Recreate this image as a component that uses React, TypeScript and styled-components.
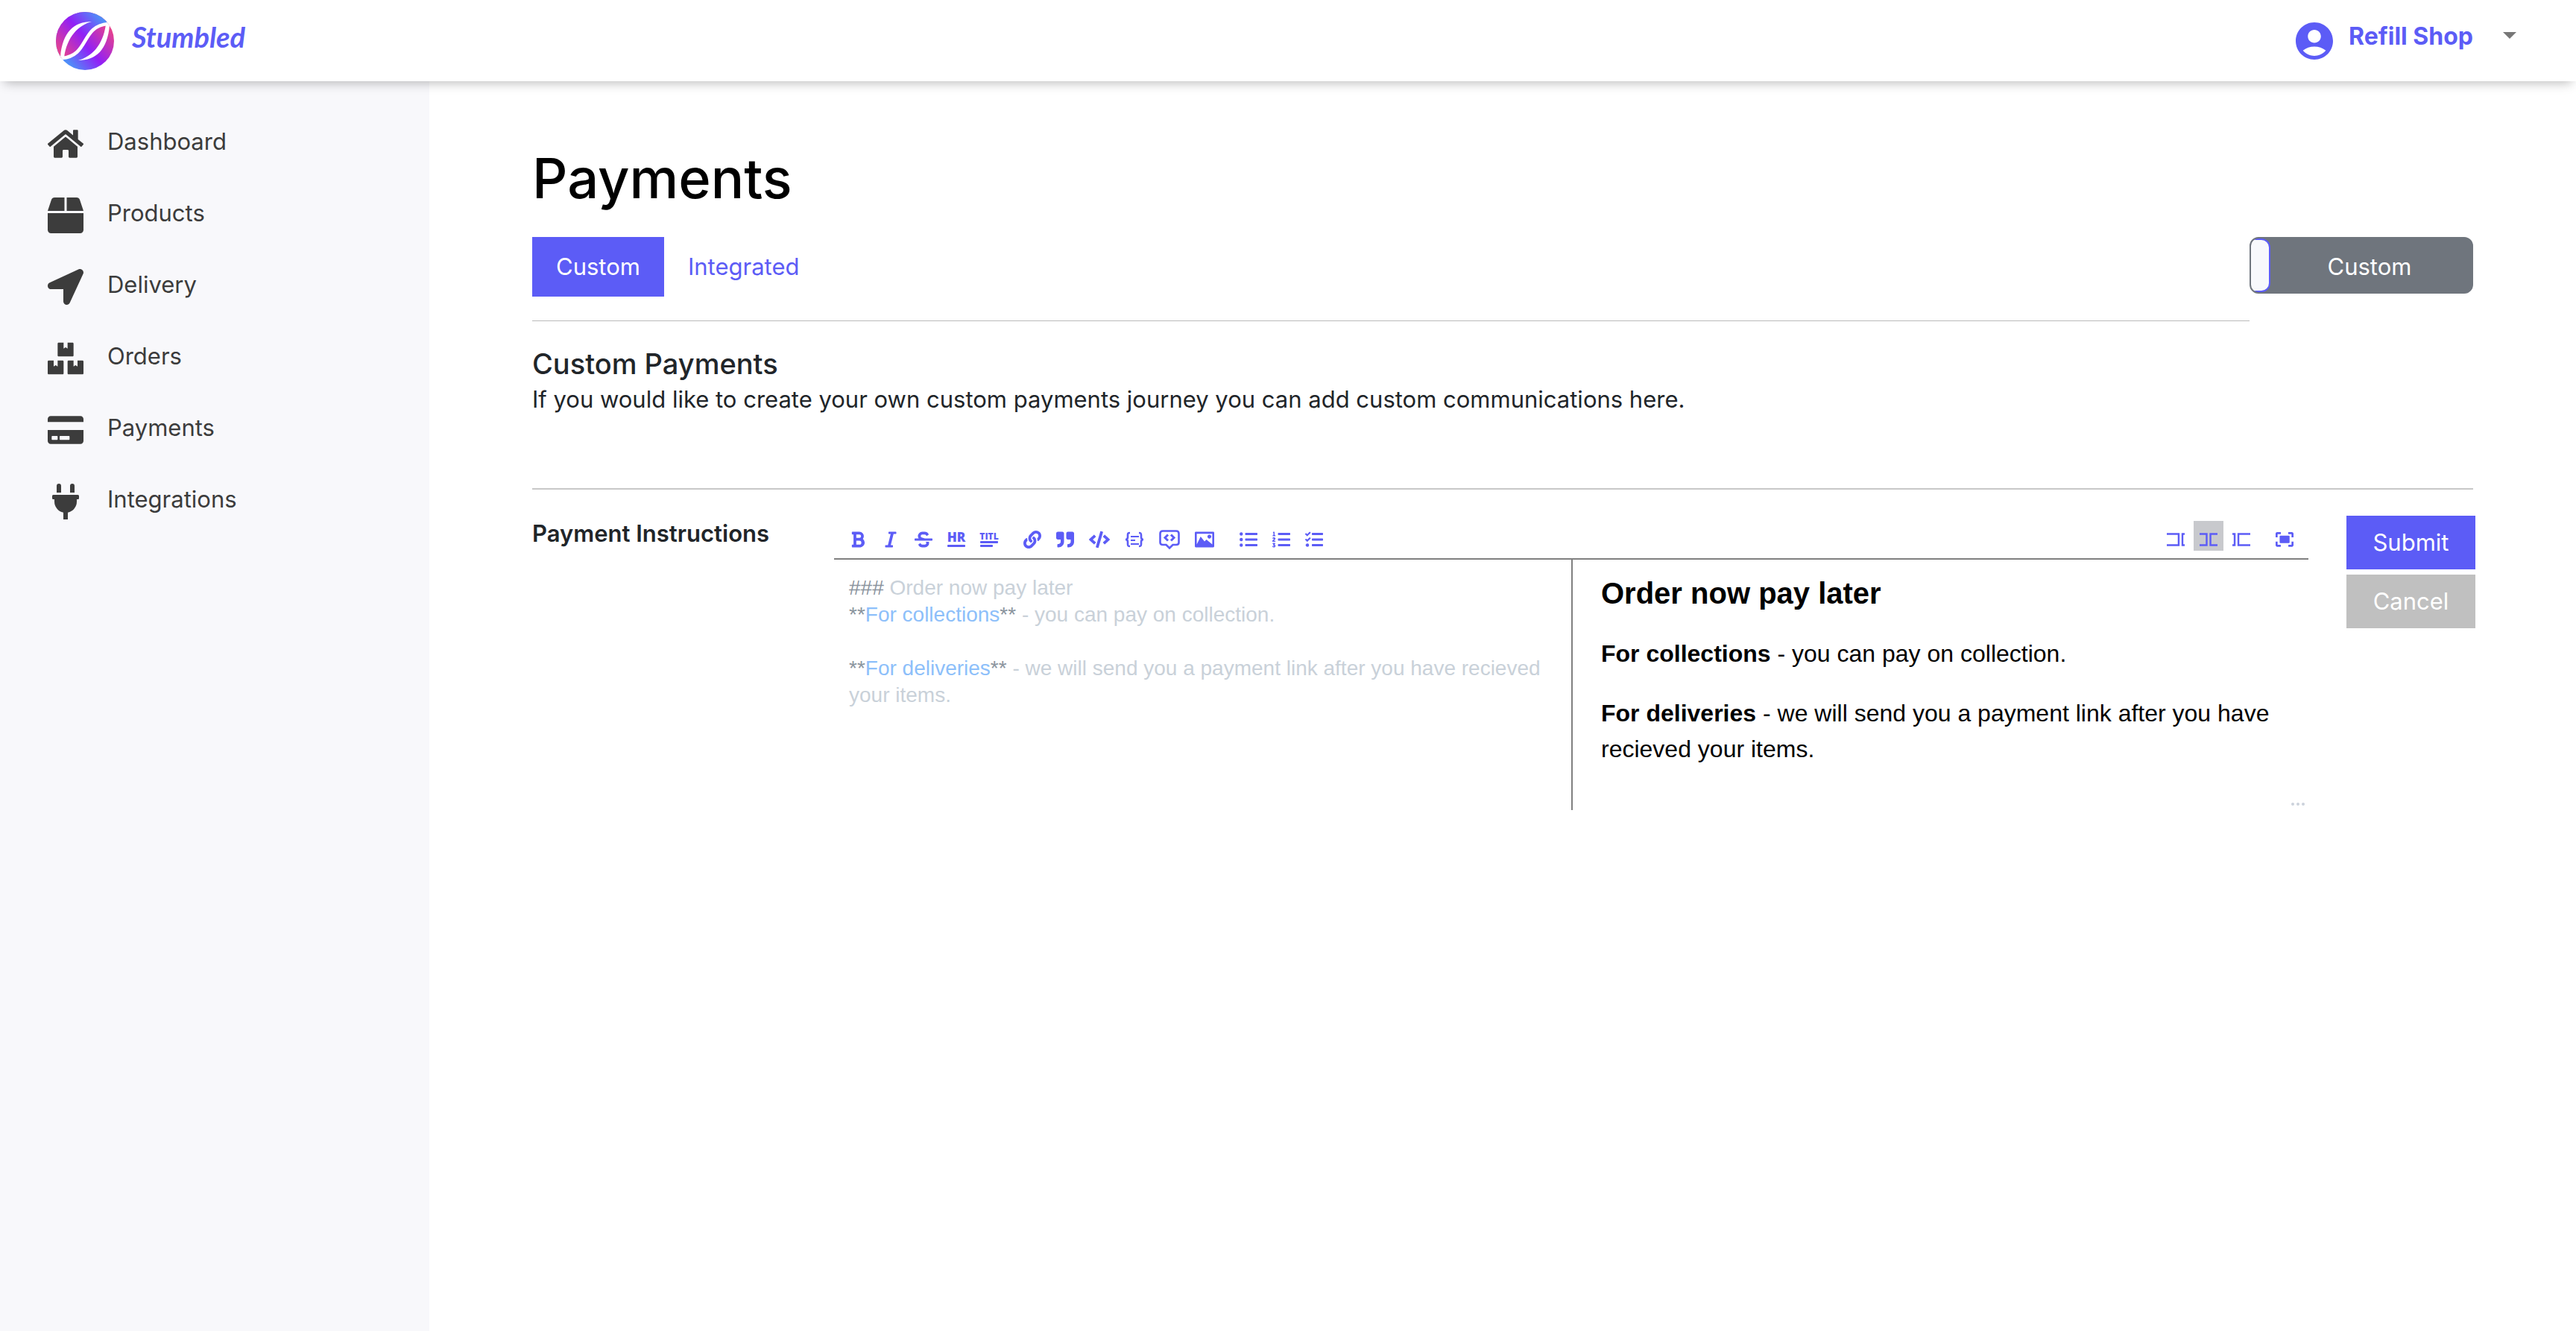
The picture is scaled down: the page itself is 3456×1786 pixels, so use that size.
import React, { useState } from "react";
import styled, { createGlobalStyle } from "styled-components";
import {
  FaBold,
  FaBox,
  FaBoxes,
  FaCode,
  FaCreditCard,
  FaHome,
  FaItalic,
  FaLink,
  FaListOl,
  FaListUl,
  FaLocationArrow,
  FaPlug,
  FaQuoteRight,
  FaStrikethrough,
  FaTasks,
} from "react-icons/fa";
import { MdAccountCircle } from "react-icons/md";

const accent = "#5c5cf6";
const uiFont = `Inter, "Noto Sans", sans-serif`;
const docFont = `"Liberation Sans", Arial, sans-serif`;

const GlobalStyle = createGlobalStyle`
  *, *::before, *::after { box-sizing: border-box; }
  body {
    margin: 0;
    background: #fff;
    color: #212529;
    font-family: ${uiFont};
    font-size: 31px;
    line-height: 48px;
  }
  h1, h2, h3, p, ul, pre { margin: 0; padding: 0; }
  ul { list-style: none; }
  button, textarea { font: inherit; border: 0; padding: 0; background: none; }
  svg { display: block; flex: none; }
`;

const Page = styled.div`
  display: flex;
  flex-direction: column;
  min-height: 100vh;
`;

const Header = styled.header`
  position: relative;
  display: flex;
  align-items: center;
  justify-content: space-between;
  height: 109px;
  padding: 0 80px 0 75px;
  background: #fff;
  box-shadow: 0 8px 14px -6px rgba(0, 0, 0, 0.28);
`;

const Brand = styled.a`
  display: flex;
  align-items: center;
  gap: 24px;
  color: ${accent};
  font: italic 700 38px/48px Lato, sans-serif;
  text-decoration: none;
`;

const BrandName = styled.span`
  padding-bottom: 12px;
`;

const Account = styled.button`
  display: flex;
  align-items: center;
  gap: 16px;
  color: ${accent};
  font-size: 32px;
  font-weight: 700;
`;

const AccountName = styled.span`
  padding-bottom: 12px;
`;

const Caret = styled.span`
  margin: 0 0 14px 24px;
  border: 9px solid transparent;
  border-top-color: #777;
  border-bottom: 0;
`;

const Body = styled.div`
  display: flex;
  flex: 1;
`;

const Sidebar = styled.nav`
  flex: none;
  width: 576px;
  padding: 33px 64px;
  background: #f8f8fb;
`;

const NavLink = styled.a`
  display: flex;
  align-items: center;
  gap: 32px;
  height: 96px;
  color: #3c3c3c;
  text-decoration: none;
`;

const NavIcon = styled.span`
  display: flex;
  justify-content: center;
  width: 48px;
  padding-top: 6px;
`;

const Main = styled.main`
  flex: 1;
  min-width: 0;
  padding: 82px 138px;
`;

const Title = styled.h1`
  margin-bottom: 31px;
  color: #000;
  font-size: 74px;
  font-weight: 500;
  line-height: 96px;
`;

const TabRow = styled.div`
  display: flex;
  align-items: flex-start;
`;

const Tabs = styled.div`
  display: flex;
  flex: 1;
  padding-bottom: 32px;
  border-bottom: 1px solid #bbb;
`;

const Tab = styled.button<{ $active: boolean }>`
  height: 80px;
  padding: 0 32px;
  background: ${(p) => (p.$active ? accent : "transparent")};
  color: ${(p) => (p.$active ? "#fff" : accent)};
`;

const ModeSwitch = styled.label`
  display: flex;
  width: 300px;
  height: 76px;
  overflow: hidden;
  border: 2px solid #6f757d;
  border-radius: 12px;
  background: #6f757d;
  color: #fff;
`;

const ModeInput = styled.input`
  appearance: none;
  width: 26px;
  height: 72px;
  margin: 0;
  border: 2px solid ${accent};
  border-left: 0;
  border-radius: 0 12px 12px 0;
  background: #f8f9fc;
`;

const ModeText = styled.span`
  flex: 1;
  padding-right: 4px;
  line-height: 76px;
  text-align: center;
`;

const Intro = styled.section`
  padding: 33px 0 95px;
  border-bottom: 2px solid #c8c8c8;
`;

const SectionTitle = styled.h2`
  font-size: 38px;
  font-weight: 500;
  line-height: 48px;
`;

const Field = styled.form`
  display: flex;
  align-items: flex-start;
  padding-top: 35px;
`;

const FieldLabel = styled.label`
  width: 405px;
  font-weight: 600;
`;

const Editor = styled.div`
  flex: 1;
  min-width: 0;
  font-family: ${docFont};
`;

const Toolbar = styled.div`
  display: flex;
  justify-content: space-between;
  padding: 7px 10px 10px;
  border-bottom: 2px solid #808080;
`;

const ToolGroup = styled.div`
  display: flex;
  gap: 4px;
  padding: 0 2px;
`;

const ToolButton = styled.button<{ $active?: boolean }>`
  display: flex;
  align-items: center;
  height: 40px;
  padding: 10px 8px 0;
  background: ${(p) => (p.$active ? "#c8c9cd" : "transparent")};
  color: ${accent};
`;

const ToolGap = styled.span`
  width: 10px;
`;

const Panes = styled.div`
  position: relative;
  display: grid;
  grid-template-columns: 1fr 1fr;
  min-height: 336px;
`;

const Source = styled.div`
  display: grid;
  padding: 20px;
  color: #c9d1d9;
  font-size: 28px;
  line-height: 36px;

  > * {
    grid-area: 1 / 1;
    width: 100%;
    white-space: pre-wrap;
    font: inherit;
  }
`;

const SourceInput = styled.textarea`
  overflow: hidden;
  resize: none;
  outline: none;
  color: transparent;
  caret-color: #212529;
`;

const Mark = styled.span`
  color: #8b949e;
`;

const Strong = styled.span`
  color: #8dbffa;
`;

const Preview = styled.div`
  display: flex;
  flex-direction: column;
  gap: 32px;
  padding: 20px 40px 20px 38px;
  border-left: 2px solid #808080;
  color: #000;
  font-size: 32px;
`;

const PreviewTitle = styled.h3`
  font-size: 40px;
  line-height: 50px;
`;

const ResizeHandle = styled.svg`
  position: absolute;
  right: 5px;
  bottom: 6px;
`;

const Actions = styled.div`
  display: flex;
  flex-direction: column;
  gap: 7px;
  width: 173px;
  margin: 0 -3px 0 51px;
`;

const ActionButton = styled.button<{ $muted?: boolean }>`
  height: 72px;
  background: ${(p) => (p.$muted ? "#c0c0c0" : accent)};
  color: #fff;
`;

const Logo = () => (
  <svg width="78" height="78" viewBox="0 0 78 78" aria-hidden="true">
    <defs>
      <linearGradient id="upper" x1="6" y1="58" x2="62" y2="10" gradientUnits="userSpaceOnUse">
        <stop offset="0" stopColor="#e8438c" />
        <stop offset="0.55" stopColor="#911ff6" />
        <stop offset="1" stopColor="#4f8ef8" />
      </linearGradient>
      <linearGradient id="lower" x1="72" y1="20" x2="16" y2="68" gradientUnits="userSpaceOnUse">
        <stop offset="0" stopColor="#e8438c" />
        <stop offset="0.55" stopColor="#911ff6" />
        <stop offset="1" stopColor="#4f8ef8" />
      </linearGradient>
      <clipPath id="disc">
        <circle cx="39" cy="39" r="39" />
      </clipPath>
    </defs>
    <g clipPath="url(#disc)">
      <rect width="78" height="78" fill="url(#lower)" />
      <path fill="url(#upper)" d="M0 62H8C45 59 33 19 70 16H78V0H0Z" />
      <path fill="none" stroke="#fff" strokeWidth="4.500" d="M0 63L8 62C45 59 33 19 70 16L78 15" />
      <path fill="#fff" d="M6 60C9 27 24 13 48 13C30 18 15 33 11 61Z" />
      <path fill="#fff" d="M72 18C69 51 54 65 30 65C48 60 63 45 67 17Z" />
    </g>
  </svg>
);

const WordIcon = ({ label, size, y, lines }: { label: string; size: number; y: number; lines: number[][] }) => (
  <svg width="24" height="24" viewBox="0 0 24 24" fill="currentColor" overflow="visible">
    <text x="12" y={y} textAnchor="middle" fontFamily="Open Sans, sans-serif" fontWeight="800" fontSize={size}>
      {label}
    </text>
    {lines.map(([top, width]) => (
      <rect key={top} y={top} width={width} height="3" rx="1" />
    ))}
  </svg>
);

const CodeBlockIcon = () => (
  <svg width="26" height="24" viewBox="0 0 26 24" fill="none" stroke="currentColor" strokeWidth="2.600">
    <path d="M7 3C4 3 4 4 4 6V9C4 11 3 12 1 12C3 12 4 13 4 15V18C4 20 4 21 7 21" />
    <path d="M19 3C22 3 22 4 22 6V9C22 11 23 12 25 12C23 12 22 13 22 15V18C22 20 22 21 19 21" />
    <path strokeWidth="2" d="M8 8H19M8 13H14M8 18H19" />
  </svg>
);

const CommentIcon = () => (
  <svg width="28" height="28" viewBox="0 0 28 28" fill="none" stroke="currentColor" strokeWidth="2.600">
    <path d="M5 2.500H23Q26.500 2.500 26.500 6V18Q26.500 21 23 21H18.500L14 25.500L9.500 21H5Q1.500 21 1.500 18V6Q1.500 2.500 5 2.500Z" />
    <path strokeWidth="3" d="M12 7.500L8 11.500L12 15.500M16 7.500L20 11.500L16 15.500" />
  </svg>
);

const ImageIcon = () => (
  <svg width="26" height="26" viewBox="0 0 20 20" fill="currentColor">
    <path d="M15 9c1.100 0 2-.9 2-2s-.9-2-2-2-2 .9-2 2 .9 2 2 2zm4-7H1c-.55 0-1 .45-1 1v14c0 .55.45 1 1 1h18c.55 0 1-.45 1-1V3c0-.55-.45-1-1-1zm-1 13l-6-5-2 2-4-5-4 8V4h16v11z" />
  </svg>
);

const PaneIcon = ({ shapes }: { shapes: string[] }) => (
  <svg width="24" height="24" viewBox="0 0 520 520" fill="currentColor">
    {shapes.map((points) => (
      <polygon key={points} points={points} />
    ))}
  </svg>
);

const FullscreenIcon = () => (
  <svg width="24" height="24" viewBox="0 0 520 520" fill="currentColor">
    <path d="M118 171V342C118 354 127 365 141 365H383C394 365 406 357 406 342V171C406 160 397 148 383 148H141C127 148 118 157 118 171zM465 413H370V471H474C500 471 520 451 520 425V321H462V413zM471 43H367V101H462V196H520V89C517 63 497 43 471 43zM58 101H153V43H46C20 43 0 63 0 89V193H58zM58 321H0V425C0 451 20 471 46 471H150V413H58z" />
  </svg>
);

const navItems = [
  { label: "Dashboard", icon: <FaHome size={48} /> },
  { label: "Products", icon: <FaBox size={48} /> },
  { label: "Delivery", icon: <FaLocationArrow size={48} /> },
  { label: "Orders", icon: <FaBoxes size={48} /> },
  { label: "Payments", icon: <FaCreditCard size={48} /> },
  { label: "Integrations", icon: <FaPlug size={48} /> },
];

const tools = [
  [
    { label: "Bold", icon: <FaBold size={24} /> },
    { label: "Italic", icon: <FaItalic size={24} /> },
    { label: "Strikethrough", icon: <FaStrikethrough size={24} /> },
    { label: "Horizontal rule", icon: <WordIcon label="HR" size={17} y={15} lines={[[19, 24]]} /> },
    { label: "Title", icon: <WordIcon label="TITL" size={12} y={12} lines={[[14, 24], [19, 17]]} /> },
  ],
  [
    { label: "Link", icon: <FaLink size={24} /> },
    { label: "Quote", icon: <FaQuoteRight size={24} /> },
    { label: "Code", icon: <FaCode size={28} /> },
    { label: "Code block", icon: <CodeBlockIcon /> },
    { label: "Comment", icon: <CommentIcon /> },
    { label: "Image", icon: <ImageIcon /> },
  ],
  [
    { label: "Bulleted list", icon: <FaListUl size={24} /> },
    { label: "Numbered list", icon: <FaListOl size={24} /> },
    { label: "Checklist", icon: <FaTasks size={24} /> },
  ],
];

const paneModes = [
  {
    label: "Edit",
    shapes: [
      "0 71 0 122 319 122 319 397 0 397 0 450 372 450 372 71",
      "429 71 520 71 520 122 481 122 481 397 520 397 520 450 429 450",
    ],
  },
  {
    label: "Live",
    shapes: [
      "0 71 0 122 179 122 179 397 0 397 0 450 232 450 232 71",
      "289 71 520 71 520 122 342 122 342 397 520 397 520 450 289 450",
    ],
  },
  {
    label: "Preview",
    shapes: [
      "0 71 0 122 39 122 39 397 0 397 0 450 93 450 93 71",
      "520 71 520 122 201 122 201 397 520 397 520 450 148 450 148 71",
    ],
  },
];

const initialSource = `### Order now pay later
**For collections** - you can pay on collection.

**For deliveries** - we will send you a payment link after you have recieved your items.`;

const highlight = (source: string) =>
  source.split(/(^#+|\*\*[^*]+\*\*)/gm).map((part, i) => {
    if (part.startsWith("#")) return <Mark key={i}>{part}</Mark>;
    if (part.startsWith("**"))
      return (
        <React.Fragment key={i}>
          <Mark>**</Mark>
          <Strong>{part.slice(2, -2)}</Strong>
          <Mark>**</Mark>
        </React.Fragment>
      );
    return part;
  });

export default function App() {
  const [tab, setTab] = useState("Custom");
  const [mode, setMode] = useState("Live");
  const [source, setSource] = useState(initialSource);

  return (
    <Page>
      <GlobalStyle />
      <Header>
        <Brand href="#">
          <Logo />
          <BrandName>Stumbled</BrandName>
        </Brand>
        <Account type="button">
          <MdAccountCircle size={60} />
          <AccountName>Refill Shop</AccountName>
          <Caret />
        </Account>
      </Header>
      <Body>
        <Sidebar>
          <ul>
            {navItems.map((item) => (
              <li key={item.label}>
                <NavLink href="#">
                  <NavIcon>{item.icon}</NavIcon>
                  {item.label}
                </NavLink>
              </li>
            ))}
          </ul>
        </Sidebar>
        <Main>
          <Title>Payments</Title>
          <TabRow>
            <Tabs>
              {["Custom", "Integrated"].map((name) => (
                <Tab key={name} type="button" $active={tab === name} onClick={() => setTab(name)}>
                  {name}
                </Tab>
              ))}
            </Tabs>
            <ModeSwitch>
              <ModeInput type="checkbox" role="switch" />
              <ModeText>Custom</ModeText>
            </ModeSwitch>
          </TabRow>
          <Intro>
            <SectionTitle>Custom Payments</SectionTitle>
            <p>If you would like to create your own custom payments journey you can add custom communications here.</p>
          </Intro>
          <Field onSubmit={(e) => e.preventDefault()}>
            <FieldLabel htmlFor="instructions">Payment Instructions</FieldLabel>
            <Editor>
              <Toolbar>
                <ToolGroup>
                  {tools.map((group, i) => (
                    <React.Fragment key={i}>
                      {i > 0 && <ToolGap />}
                      {group.map((tool) => (
                        <ToolButton key={tool.label} type="button" aria-label={tool.label}>
                          {tool.icon}
                        </ToolButton>
                      ))}
                    </React.Fragment>
                  ))}
                </ToolGroup>
                <ToolGroup>
                  {paneModes.map((pane) => (
                    <ToolButton
                      key={pane.label}
                      type="button"
                      aria-label={pane.label}
                      $active={mode === pane.label}
                      onClick={() => setMode(pane.label)}
                    >
                      <PaneIcon shapes={pane.shapes} />
                    </ToolButton>
                  ))}
                  <ToolGap />
                  <ToolButton type="button" aria-label="Fullscreen">
                    <FullscreenIcon />
                  </ToolButton>
                </ToolGroup>
              </Toolbar>
              <Panes>
                <Source>
                  <pre aria-hidden="true">{highlight(source)}</pre>
                  <SourceInput
                    id="instructions"
                    spellCheck={false}
                    value={source}
                    onChange={(e) => setSource(e.target.value)}
                  />
                </Source>
                <Preview>
                  <PreviewTitle>Order now pay later</PreviewTitle>
                  <p>
                    <strong>For collections</strong> - you can pay on collection.
                  </p>
                  <p>
                    <strong>For deliveries</strong> - we will send you a payment link after you have recieved your
                    items.
                  </p>
                </Preview>
                <ResizeHandle width="18" height="4" viewBox="0 0 18 4" fill="#ccd2dc">
                  <circle cx="2" cy="2" r="2" />
                  <circle cx="9" cy="2" r="2" />
                  <circle cx="16" cy="2" r="2" />
                </ResizeHandle>
              </Panes>
            </Editor>
            <Actions>
              <ActionButton type="submit">Submit</ActionButton>
              <ActionButton type="button" $muted>
                Cancel
              </ActionButton>
            </Actions>
          </Field>
        </Main>
      </Body>
    </Page>
  );
}
